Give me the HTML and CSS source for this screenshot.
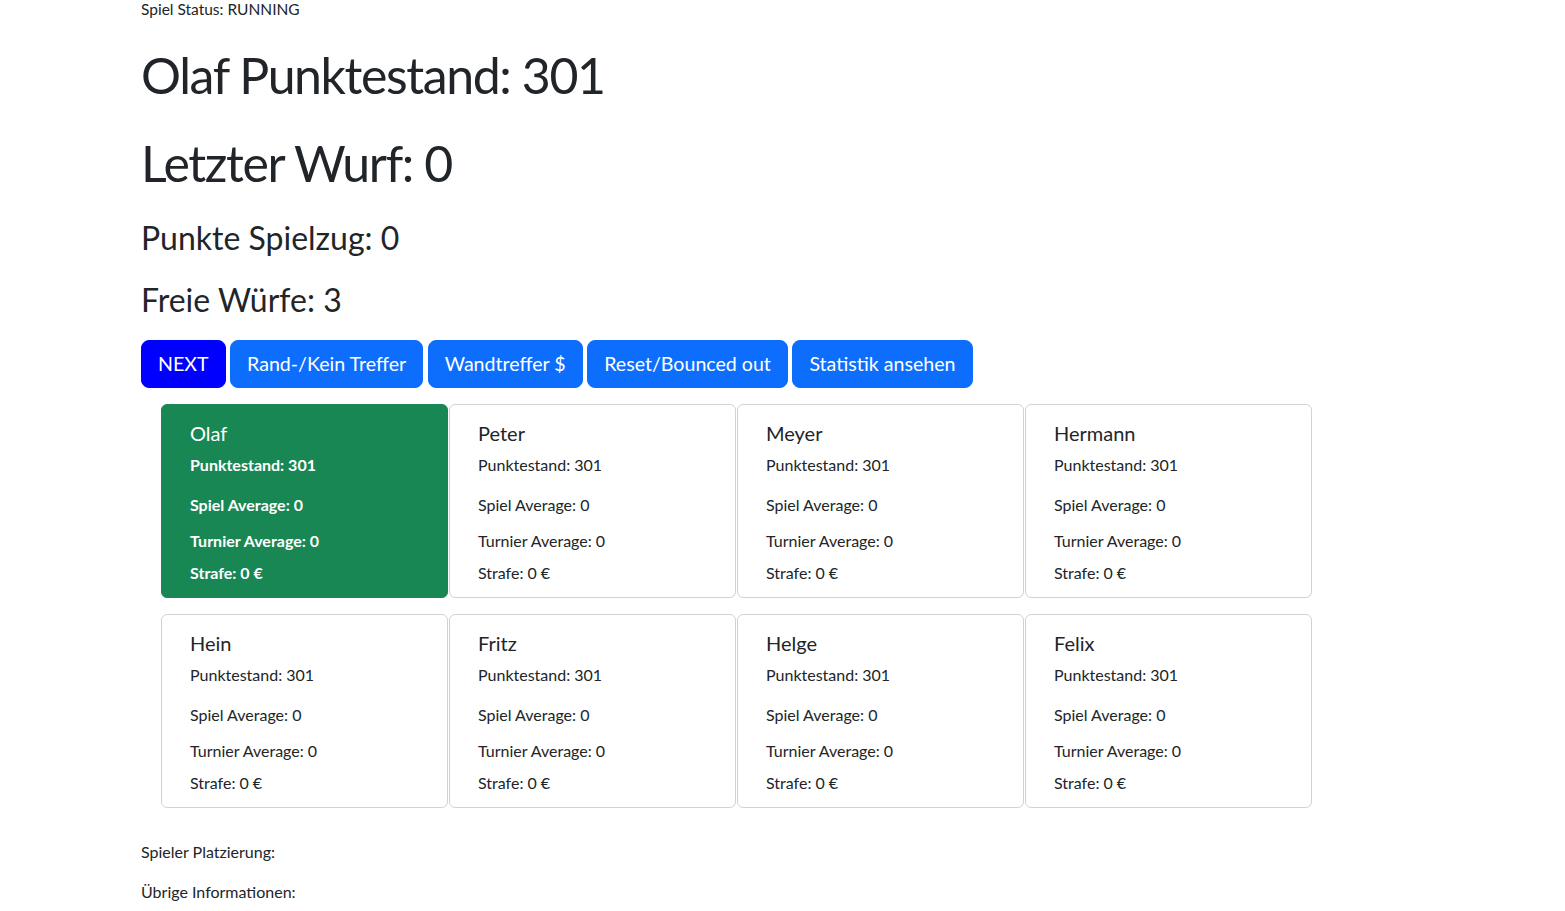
FILE: index.html
```html
<!DOCTYPE html>
<html lang="de">
<head>
<meta charset="utf-8">
<title>Darts</title>
<link rel="stylesheet" href="styles.css">
</head>
<body>
<div class="page">
  <div class="status">Spiel Status: RUNNING</div>
  <h1 class="title">Olaf Punktestand: 301</h1>
  <h1 class="title">Letzter Wurf: 0</h1>
  <h3 class="sub">Punkte Spielzug: 0</h3>
  <h3 class="sub">Freie Würfe: 3</h3>
  <div class="actions">
    <button class="btn btn-next">NEXT</button>
    <button class="btn">Rand-/Kein Treffer</button>
    <button class="btn">Wandtreffer $</button>
    <button class="btn">Reset/Bounced out</button>
    <button class="btn">Statistik ansehen</button>
  </div>
  <div class="players">
    <div class="card active">
      <div class="name">Olaf</div>
      <p class="score">Punktestand: 301</p>
      <p class="avg">Spiel Average: 0</p>
      <p class="tavg">Turnier Average: 0</p>
      <p class="fine">Strafe: 0 €</p>
    </div>
    <div class="card">
      <div class="name">Peter</div>
      <p class="score">Punktestand: 301</p>
      <p class="avg">Spiel Average: 0</p>
      <p class="tavg">Turnier Average: 0</p>
      <p class="fine">Strafe: 0 €</p>
    </div>
    <div class="card">
      <div class="name">Meyer</div>
      <p class="score">Punktestand: 301</p>
      <p class="avg">Spiel Average: 0</p>
      <p class="tavg">Turnier Average: 0</p>
      <p class="fine">Strafe: 0 €</p>
    </div>
    <div class="card">
      <div class="name">Hermann</div>
      <p class="score">Punktestand: 301</p>
      <p class="avg">Spiel Average: 0</p>
      <p class="tavg">Turnier Average: 0</p>
      <p class="fine">Strafe: 0 €</p>
    </div>
    <div class="card">
      <div class="name">Hein</div>
      <p class="score">Punktestand: 301</p>
      <p class="avg">Spiel Average: 0</p>
      <p class="tavg">Turnier Average: 0</p>
      <p class="fine">Strafe: 0 €</p>
    </div>
    <div class="card">
      <div class="name">Fritz</div>
      <p class="score">Punktestand: 301</p>
      <p class="avg">Spiel Average: 0</p>
      <p class="tavg">Turnier Average: 0</p>
      <p class="fine">Strafe: 0 €</p>
    </div>
    <div class="card">
      <div class="name">Helge</div>
      <p class="score">Punktestand: 301</p>
      <p class="avg">Spiel Average: 0</p>
      <p class="tavg">Turnier Average: 0</p>
      <p class="fine">Strafe: 0 €</p>
    </div>
    <div class="card">
      <div class="name">Felix</div>
      <p class="score">Punktestand: 301</p>
      <p class="avg">Spiel Average: 0</p>
      <p class="tavg">Turnier Average: 0</p>
      <p class="fine">Strafe: 0 €</p>
    </div>
  </div>
  <p class="info first">Spieler Platzierung:</p>
  <p class="info">Übrige Informationen:</p>
  <div class="more">Anzahl geworfener Darts: 0</div>
</div>
</body>
</html>
```
FILE: styles.css
```css
* { box-sizing: border-box; }
html, body { margin: 0; padding: 0; background: #fff; }
body {
  font-family: Lato, "Open Sans", sans-serif;
  color: #212529;
  font-size: 16px;
  line-height: 24px;
}
.page { padding-left: 141px; }
.status { line-height: 19px; font-size: 15.5px; }
.title {
  margin: 24px 0 0;
  font-size: 50px;
  line-height: 64px;
  font-weight: 400;
  letter-spacing: -1.4px;
}
.sub {
  margin: 22px 0 0;
  font-size: 32px;
  line-height: 40px;
  font-weight: 400;
}
.title + .sub { margin-top: 23px; }
.actions {
  margin-top: 20px;
  display: flex;
  gap: 4.5px;
}
.btn {
  font-family: inherit;
  font-size: 19.6px;
  line-height: 30px;
  padding: 8px 16px;
  border: 1px solid #0d6efd;
  background: #0d6efd;
  color: #fff;
  border-radius: 8px;
  cursor: pointer;
}
.btn-next { background: #0000ff; border-color: #0000ff; }
.players {
  margin: 16px 0 0 20px;
  display: grid;
  grid-template-columns: repeat(4, 287px);
  column-gap: 1px;
  row-gap: 16px;
}
.card {
  border: 1px solid rgba(0,0,0,.175);
  border-radius: 6px;
  padding: 16px 28px 12px;
  height: 194px;
}
.card p { margin: 0; }
.name { font-size: 20px; line-height: 24px; margin-bottom: 8px; }
.score { margin-bottom: 16px !important; }
.avg { margin-bottom: 12px !important; }
.tavg { margin-bottom: 8px !important; }
.active {
  background: #198754;
  border-color: #198754;
  color: #fff;
}
.active p { font-weight: 700; }
.info { margin: 16px 0 0; }
.info.first { margin-top: 32px; }
.more { padding-left: 40px; }
```
